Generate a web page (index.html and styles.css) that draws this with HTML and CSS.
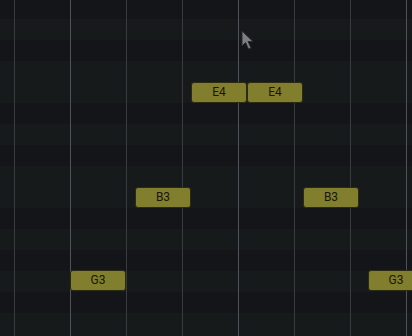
FILE: index.html
```html
<!DOCTYPE html>
<html lang="en">
<head>
  <meta charset="UTF-8">
  <meta name="viewport" content="width=device-width, initial-scale=1">
  <title>Piano Roll</title>
  <link rel="stylesheet" href="styles.css">
</head>
<body>
  <div class="roll">
    <!-- pitch rows, G#4 down to E3 -->
    <div class="rows">
      <div class="row black"></div>
      <div class="row white"></div>
      <div class="row black"></div>
      <div class="row white"></div>
      <div class="row white"></div>
      <div class="row black"></div>
      <div class="row white"></div>
      <div class="row black"></div>
      <div class="row white"></div>
      <div class="row white"></div>
      <div class="row black"></div>
      <div class="row white"></div>
      <div class="row black"></div>
      <div class="row white"></div>
      <div class="row black"></div>
      <div class="row white"></div>
      <div class="row white"></div>
    </div>

    <!-- beat / bar lines -->
    <div class="beats">
      <div class="beat"></div>
      <div class="beat bar"></div>
      <div class="beat"></div>
      <div class="beat"></div>
      <div class="beat bar"></div>
      <div class="beat"></div>
      <div class="beat"></div>
      <div class="beat bar"></div>
    </div>

    <!-- notes -->
    <div class="note" style="left:191px; top:82px;">E4</div>
    <div class="note" style="left:247px; top:82px;">E4</div>
    <div class="note" style="left:135px; top:187px;">B3</div>
    <div class="note" style="left:303px; top:187px;">B3</div>
    <div class="note" style="left:70px; top:270px;">G3</div>
    <div class="note" style="left:368px; top:270px;">G3</div>

    <svg class="cursor" width="16" height="22" viewBox="0 0 16 22">
      <path d="M1 1 L1 16 L4.5 12.5 L7.5 19 L10 18 L7 11.5 L12 11.5 Z" fill="#7e7f80" stroke="#2a2b2d" stroke-width="1" stroke-linejoin="round"/>
    </svg>
  </div>
</body>
</html>
```

FILE: styles.css
```css
/* Page */
html, body {
  margin: 0;
  height: 100%;
  background: #151619;
  overflow: hidden;
  font-family: Roboto, "Liberation Sans", sans-serif;
}
/* Canvas for the piano roll */
.roll {
  position: relative;
  width: 412px;
  height: 336px;
  overflow: hidden;
}
/* Horizontal pitch rows */
.rows {
  display: flex;
  flex-direction: column;
  margin-top: -2px;
}
.row {
  height: 21px;
  flex-shrink: 0;
}
.row.white {
  background: #161a1b;
}
.row.black {
  background: #141518;
}
/* Vertical beat lines */
.beats {
  position: absolute;
  top: 0;
  left: 14px;
  bottom: 0;
  display: flex;
  gap: 55px;
}
.beat {
  width: 1px;
  height: 100%;
  background: #383b40;
}
.beat.bar {
  background: #4f5258;
}
/* Notes */
.note {
  position: absolute;
  width: 56px;
  height: 21px;
  box-sizing: border-box;
  border: 1px solid #2b2a14;
  border-radius: 3px;
  background: #817e2e;
  color: #18180e;
  font-size: 12px;
  line-height: 19px;
  text-align: center;
}
.cursor {
  position: absolute;
  left: 241px;
  top: 30px;
}
```
